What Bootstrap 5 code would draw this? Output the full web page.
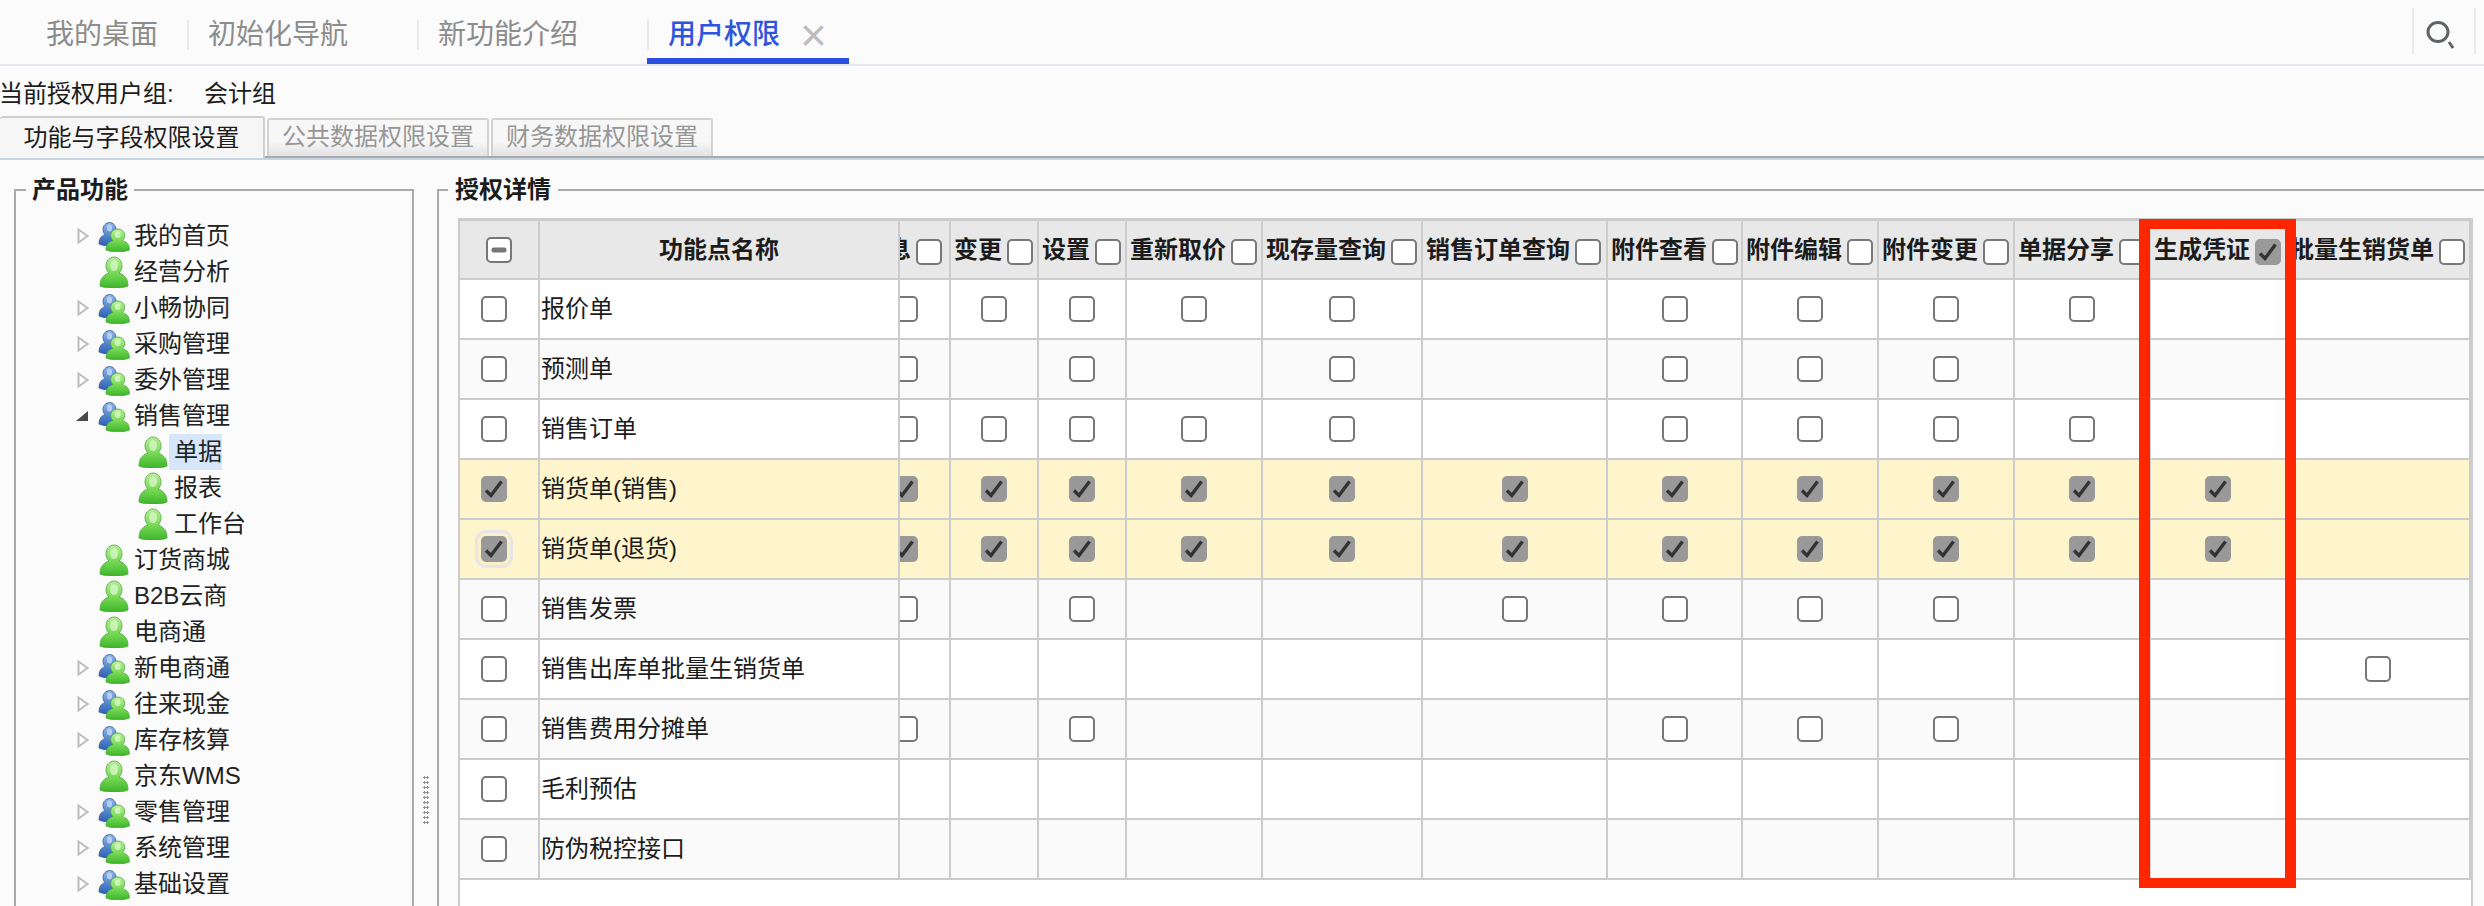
<!DOCTYPE html>
<html lang="zh-CN">
<head>
<meta charset="utf-8">
<title>用户权限</title>
<link href="https://cdn.jsdelivr.net/npm/bootstrap@5.3.0/dist/css/bootstrap.min.css" rel="stylesheet">
<style>
html,body{height:906px;overflow:hidden}
body{background:#fbfbfb;color:#1c1c1c;font-family:"Liberation Sans","Noto Sans CJK SC",sans-serif;font-size:24px;line-height:36px}
.page-root{position:relative;height:906px;overflow:hidden}
.svg-defs{position:absolute;width:0;height:0}
/* top bar */
.top-bar{height:66px;border-bottom:2px solid #e2e7ee}
.doc-tab{width:230px;height:64px;padding-top:20px;color:#8c8c8c;font-size:28px}
.doc-tab-first{width:187px}
.doc-tab-label{display:block;height:30px;line-height:30px;padding-left:19px;border-left:2px solid #e6e9ee}
.doc-tab-first .doc-tab-label{border-left:0;padding-left:46px}
.doc-tab-active{width:202px;height:64px;border-bottom:6px solid #2b50e0;color:#2f55dc;font-weight:500}
.doc-tab-active .doc-tab-label{padding-left:19px;display:flex;align-items:center}
.doc-tab-x{color:#bcbcbc;font-weight:400;margin-left:20px;font-size:46px;line-height:30px}
.search-box{width:64px;height:46px;margin:8px 8px 0 auto;border-left:2px solid #e6e9ee;border-right:2px solid #e6e9ee;padding:8px 0 0 11px}
/* user group line */
.group-line{height:50px;padding-top:10px;margin-left:-1px}
.group-label{width:205px}
/* sub tabs */
.sub-tabs{height:44px;border-bottom:2px solid #c5d5e4;box-shadow:inset 0 -2px 0 #aaa}
.sub-tab{height:38px;margin:0 0 2px 2px;padding:0 13px;line-height:34px;border:2px solid #d2d2d2;border-bottom:0;border-radius:3px 3px 0 0;color:#969696;background:linear-gradient(#f7f7f7 60%,#e2e2e2)}
.sub-tab-active{width:265px;height:42px;margin:0;padding:0;line-height:40px;text-align:center;color:#1c1c1c;background:#f6f6f6;border-width:2px 2px 0 0;border-color:#cfcfcf}
/* panels */
.main-area{height:746px;padding:12px 0 0 14px}
.panel{min-width:0;margin:0;padding:0;border:2px solid #aaa;border-bottom:0}
.panel-tree{width:400px;flex:none}
.panel-detail{flex:1 1 auto;border-right:0}
.panel-title{float:none;width:auto;margin:0 0 10px 10px;padding:0 6px;font-size:24px;line-height:36px;font-weight:700}
.panel-detail .panel-title{margin-left:9px;padding:0 7px}
.gutter{width:23px;flex:none;padding-top:603px}
.gutter-dots{width:6px;height:50px;margin:0 auto;background:radial-gradient(circle,#8f8f8f 1.1px,transparent 1.4px) 0 0/3px 5px}
/* tree */
.tree-row{height:36px;padding-left:60px}
.tree-l2{padding-left:121px}
.tree-arrow{width:22px;height:16px;flex:none}
.tree-icon{width:32px;height:32px;flex:none}
.tree-text{padding-left:4px;color:#222;white-space:nowrap}
.tree-selected{background:#d6e6fb;padding:0 0 0 5px;height:36px}
.tree-l2 .tree-text{padding-left:5px}
/* grid */
.grid-box{height:688px;margin:0 11px 0 19px;background:#fff;border:solid #ccc;border-width:3px 2px 0 2px}
.grid-pane{width:1571px;overflow:hidden}
table.perm-grid{table-layout:fixed;border-collapse:separate;border-spacing:0;margin:0;color:#1c1c1c}
.perm-fixed{width:440px;flex:none}
.perm-scroll{width:1611px;margin-left:-40px!important}
.perm-grid>*>tr>*{padding:0;height:60px;border-style:solid;border-color:#ccc;border-width:0 2px 2px 0;background:#fff;box-shadow:none;vertical-align:middle;text-align:center;font-size:24px;line-height:30px;white-space:nowrap}
.perm-grid>thead>tr>th{height:59px;background:#e8e8e8;font-weight:700}
.perm-grid>tbody>tr.row-alt>td{background:#fafafa}
.perm-grid>tbody>tr.row-sel>td{background:#fef5cc}
.perm-grid>tbody>tr>td.name-cell{text-align:left;padding-left:1px}
.perm-grid>tbody>tr>td.pick-cell{padding-right:10px}
.head-cell{padding-left:3px;gap:5px}
input.cb.form-check-input{display:block;flex:none;width:26px;height:26px;margin:0 auto;border:2px solid #777;border-radius:5px;background-color:#fff;box-shadow:none}
.head-cell input.cb.form-check-input{margin:4px 0 0}
input.cb.form-check-input:checked{background-color:#999;border-color:#999;--bs-form-check-bg-image:url("data:image/svg+xml,%3Csvg xmlns='http://www.w3.org/2000/svg' viewBox='0 0 22 22'%3E%3Cpath d='M3 12.500l5 5L18.500 3.500' fill='none' stroke='%23333' stroke-width='3.400'/%3E%3C/svg%3E")}
input.cb-mixed.form-check-input{background-image:url("data:image/svg+xml,%3Csvg xmlns='http://www.w3.org/2000/svg' viewBox='0 0 22 22'%3E%3Crect x='3.500' y='8.500' width='15' height='5' rx='2' fill='%23777'/%3E%3C/svg%3E")}
input.cb-focus.form-check-input{box-shadow:0 0 0 3px #fbf0c8,0 0 0 6px #e6e6e6;border-color:#777}
/* overlays */
.mark-layer{position:absolute;inset:0;overflow:hidden;pointer-events:none}
.mark-grid{display:grid;grid-template-columns:repeat(5,620px);grid-auto-rows:260px;width:3100px;margin:-14px 0 0 -110px}
.mark-tile{display:flex;flex-direction:column;align-items:center;justify-content:center;transform:rotate(-16deg);color:rgba(0,0,0,.022);font-size:40px;line-height:62px;white-space:nowrap}
.mark-second{padding-left:20px}
.note-box{position:absolute;left:2139px;top:219px;width:157px;height:669px;border:11px solid #ff2600;border-top-width:10px;border-bottom-width:10px;pointer-events:none}
</style>
</head>
<body>
<svg class="svg-defs" aria-hidden="true">
  <defs>
    <linearGradient id="gr" x1="0" y1="0" x2="0" y2="1"><stop offset="0" stop-color="#b8ee9a"/><stop offset=".55" stop-color="#74d853"/><stop offset="1" stop-color="#3cb42a"/></linearGradient>
    <linearGradient id="bl" x1="0" y1="0" x2="0" y2="1"><stop offset="0" stop-color="#8fb6e8"/><stop offset="1" stop-color="#2a5fb5"/></linearGradient>
    <symbol id="one" viewBox="0 0 32 32">
      <path d="M2 30c0-7 3-11 9-13-2-2-3-4.500-3-7 0-5 3.500-9 8-9s8 4 8 9c0 2.500-1 5-3 7 6 2 9 6 9 13-3 1.500-8 2-14 2s-11-.5-14-2z" fill="url(#gr)" stroke="#4aa938" stroke-width=".8"/>
      <ellipse cx="16" cy="9.500" rx="4" ry="5.500" fill="#d6f6c4" opacity=".8"/>
    </symbol>
    <symbol id="two" viewBox="0 0 32 32">
      <path d="M1 24c0-5 2-8 6-9.500-1.500-1.500-2-3-2-5 0-4 3-7 6.500-7s6.500 3 6.500 7c0 2-.5 3.500-2 5 4 1.500 6 4.500 6 9.500-3 1.300-6 1.800-10.500 1.800S4 25.300 1 24z" fill="url(#bl)" stroke="#2b5a9f" stroke-width=".8"/>
      <ellipse cx="11.500" cy="8" rx="2.600" ry="3.500" fill="#cfe0f7" opacity=".7"/>
      <path d="M8 30c0-5 2-8 7-9.500-1.500-1.500-2.300-3-2.300-5 0-4 3-6.500 7-6.500s7 2.500 7 6.500c0 2-.8 3.500-2.300 5 5 1.500 7 4.500 7 9.500-3 1.300-7 1.800-11.700 1.800S11 31.300 8 30z" fill="url(#gr)" stroke="#4aa938" stroke-width=".8"/>
      <ellipse cx="19.700" cy="14.500" rx="3" ry="3.600" fill="#d6f6c4" opacity=".8"/>
    </symbol>
    <symbol id="closed" viewBox="0 0 22 16"><path d="M2.500 1.500l9 6.500-9 6.500z" fill="#fff" stroke="#bdbdbd" stroke-width="2"/></symbol>
    <symbol id="opened" viewBox="0 0 22 16"><path d="M12 3v10H0z" fill="#4a4a4a"/></symbol>
  </defs>
</svg>

<div class="page-root">
  <header class="top-bar d-flex">
    <div class="doc-tab doc-tab-first"><span class="doc-tab-label">我的桌面</span></div>
    <div class="doc-tab"><span class="doc-tab-label">初始化导航</span></div>
    <div class="doc-tab"><span class="doc-tab-label">新功能介绍</span></div>
    <div class="doc-tab doc-tab-active"><span class="doc-tab-label">用户权限<span class="doc-tab-x">×</span></span></div>
    <div class="search-box">
      <svg width="32" height="30" viewBox="0 0 32 30"><ellipse cx="13" cy="11" rx="10" ry="9.500" fill="none" stroke="#5f6368" stroke-width="3"/><path d="M24 21l4 6" stroke="#5f6368" stroke-width="3"/></svg>
    </div>
  </header>

  <div class="group-line d-flex"><span class="group-label">当前授权用户组:</span><span>会计组</span></div>

  <div class="sub-tabs d-flex align-items-end">
    <div class="sub-tab sub-tab-active">功能与字段权限设置</div>
    <div class="sub-tab">公共数据权限设置</div>
    <div class="sub-tab">财务数据权限设置</div>
  </div>

  <main class="main-area d-flex">
    <fieldset class="panel panel-tree">
      <legend class="panel-title">产品功能</legend>
      <ul class="list-unstyled m-0">
        <li class="tree-row d-flex align-items-center"><svg class="tree-arrow"><use href="#closed"/></svg><svg class="tree-icon"><use href="#two"/></svg><span class="tree-text">我的首页</span></li>
        <li class="tree-row d-flex align-items-center"><span class="tree-arrow"></span><svg class="tree-icon"><use href="#one"/></svg><span class="tree-text">经营分析</span></li>
        <li class="tree-row d-flex align-items-center"><svg class="tree-arrow"><use href="#closed"/></svg><svg class="tree-icon"><use href="#two"/></svg><span class="tree-text">小畅协同</span></li>
        <li class="tree-row d-flex align-items-center"><svg class="tree-arrow"><use href="#closed"/></svg><svg class="tree-icon"><use href="#two"/></svg><span class="tree-text">采购管理</span></li>
        <li class="tree-row d-flex align-items-center"><svg class="tree-arrow"><use href="#closed"/></svg><svg class="tree-icon"><use href="#two"/></svg><span class="tree-text">委外管理</span></li>
        <li class="tree-row d-flex align-items-center"><svg class="tree-arrow"><use href="#opened"/></svg><svg class="tree-icon"><use href="#two"/></svg><span class="tree-text">销售管理</span></li>
        <li class="tree-row tree-l2 d-flex align-items-center"><svg class="tree-icon"><use href="#one"/></svg><span class="tree-text tree-selected">单据</span></li>
        <li class="tree-row tree-l2 d-flex align-items-center"><svg class="tree-icon"><use href="#one"/></svg><span class="tree-text">报表</span></li>
        <li class="tree-row tree-l2 d-flex align-items-center"><svg class="tree-icon"><use href="#one"/></svg><span class="tree-text">工作台</span></li>
        <li class="tree-row d-flex align-items-center"><span class="tree-arrow"></span><svg class="tree-icon"><use href="#one"/></svg><span class="tree-text">订货商城</span></li>
        <li class="tree-row d-flex align-items-center"><span class="tree-arrow"></span><svg class="tree-icon"><use href="#one"/></svg><span class="tree-text">B2B云商</span></li>
        <li class="tree-row d-flex align-items-center"><span class="tree-arrow"></span><svg class="tree-icon"><use href="#one"/></svg><span class="tree-text">电商通</span></li>
        <li class="tree-row d-flex align-items-center"><svg class="tree-arrow"><use href="#closed"/></svg><svg class="tree-icon"><use href="#two"/></svg><span class="tree-text">新电商通</span></li>
        <li class="tree-row d-flex align-items-center"><svg class="tree-arrow"><use href="#closed"/></svg><svg class="tree-icon"><use href="#two"/></svg><span class="tree-text">往来现金</span></li>
        <li class="tree-row d-flex align-items-center"><svg class="tree-arrow"><use href="#closed"/></svg><svg class="tree-icon"><use href="#two"/></svg><span class="tree-text">库存核算</span></li>
        <li class="tree-row d-flex align-items-center"><span class="tree-arrow"></span><svg class="tree-icon"><use href="#one"/></svg><span class="tree-text">京东WMS</span></li>
        <li class="tree-row d-flex align-items-center"><svg class="tree-arrow"><use href="#closed"/></svg><svg class="tree-icon"><use href="#two"/></svg><span class="tree-text">零售管理</span></li>
        <li class="tree-row d-flex align-items-center"><svg class="tree-arrow"><use href="#closed"/></svg><svg class="tree-icon"><use href="#two"/></svg><span class="tree-text">系统管理</span></li>
        <li class="tree-row d-flex align-items-center"><svg class="tree-arrow"><use href="#closed"/></svg><svg class="tree-icon"><use href="#two"/></svg><span class="tree-text">基础设置</span></li>
      </ul>
    </fieldset>

    <div class="gutter"><div class="gutter-dots"></div></div>

    <fieldset class="panel panel-detail">
      <legend class="panel-title">授权详情</legend>
      <div class="grid-box d-flex align-items-start">
        <table class="table perm-grid perm-fixed">
          <colgroup><col style="width:80px"><col style="width:360px"></colgroup>
          <thead><tr><th><input class="form-check-input cb cb-mixed" type="checkbox" aria-label="全选"></th><th>功能点名称</th></tr></thead>
          <tbody>
            <tr><td class="pick-cell"><input class="form-check-input cb" type="checkbox"></td><td class="name-cell">报价单</td></tr>
            <tr class="row-alt"><td class="pick-cell"><input class="form-check-input cb" type="checkbox"></td><td class="name-cell">预测单</td></tr>
            <tr><td class="pick-cell"><input class="form-check-input cb" type="checkbox"></td><td class="name-cell">销售订单</td></tr>
            <tr class="row-sel"><td class="pick-cell"><input class="form-check-input cb" type="checkbox" checked></td><td class="name-cell">销货单(销售)</td></tr>
            <tr class="row-sel"><td class="pick-cell"><input class="form-check-input cb cb-focus" type="checkbox" checked></td><td class="name-cell">销货单(退货)</td></tr>
            <tr class="row-alt"><td class="pick-cell"><input class="form-check-input cb" type="checkbox"></td><td class="name-cell">销售发票</td></tr>
            <tr><td class="pick-cell"><input class="form-check-input cb" type="checkbox"></td><td class="name-cell">销售出库单批量生销货单</td></tr>
            <tr class="row-alt"><td class="pick-cell"><input class="form-check-input cb" type="checkbox"></td><td class="name-cell">销售费用分摊单</td></tr>
            <tr><td class="pick-cell"><input class="form-check-input cb" type="checkbox"></td><td class="name-cell">毛利预估</td></tr>
            <tr class="row-alt"><td class="pick-cell"><input class="form-check-input cb" type="checkbox"></td><td class="name-cell">防伪税控接口</td></tr>
          </tbody>
        </table>
        <div class="grid-pane">
          <table class="table perm-grid perm-scroll">
            <colgroup><col style="width:91px"><col style="width:88px"><col style="width:88px"><col style="width:136px"><col style="width:160px"><col style="width:185px"><col style="width:135px"><col style="width:136px"><col style="width:136px"><col style="width:136px"><col style="width:136px"><col style="width:184px"></colgroup>
            <thead><tr>
              <th><div class="head-cell d-flex align-items-center">信息<input class="form-check-input cb" type="checkbox"></div></th>
              <th><div class="head-cell d-flex align-items-center">变更<input class="form-check-input cb" type="checkbox"></div></th>
              <th><div class="head-cell d-flex align-items-center">设置<input class="form-check-input cb" type="checkbox"></div></th>
              <th><div class="head-cell d-flex align-items-center">重新取价<input class="form-check-input cb" type="checkbox"></div></th>
              <th><div class="head-cell d-flex align-items-center">现存量查询<input class="form-check-input cb" type="checkbox"></div></th>
              <th><div class="head-cell d-flex align-items-center">销售订单查询<input class="form-check-input cb" type="checkbox"></div></th>
              <th><div class="head-cell d-flex align-items-center">附件查看<input class="form-check-input cb" type="checkbox"></div></th>
              <th><div class="head-cell d-flex align-items-center">附件编辑<input class="form-check-input cb" type="checkbox"></div></th>
              <th><div class="head-cell d-flex align-items-center">附件变更<input class="form-check-input cb" type="checkbox"></div></th>
              <th><div class="head-cell d-flex align-items-center">单据分享<input class="form-check-input cb" type="checkbox"></div></th>
              <th><div class="head-cell d-flex align-items-center">生成凭证<input class="form-check-input cb" type="checkbox" checked></div></th>
              <th><div class="head-cell d-flex align-items-center">批量生销货单<input class="form-check-input cb" type="checkbox"></div></th>
            </tr></thead>
            <tbody>
              <tr><td><input class="form-check-input cb" type="checkbox"></td><td><input class="form-check-input cb" type="checkbox"></td><td><input class="form-check-input cb" type="checkbox"></td><td><input class="form-check-input cb" type="checkbox"></td><td><input class="form-check-input cb" type="checkbox"></td><td></td><td><input class="form-check-input cb" type="checkbox"></td><td><input class="form-check-input cb" type="checkbox"></td><td><input class="form-check-input cb" type="checkbox"></td><td><input class="form-check-input cb" type="checkbox"></td><td></td><td></td></tr>
              <tr class="row-alt"><td><input class="form-check-input cb" type="checkbox"></td><td></td><td><input class="form-check-input cb" type="checkbox"></td><td></td><td><input class="form-check-input cb" type="checkbox"></td><td></td><td><input class="form-check-input cb" type="checkbox"></td><td><input class="form-check-input cb" type="checkbox"></td><td><input class="form-check-input cb" type="checkbox"></td><td></td><td></td><td></td></tr>
              <tr><td><input class="form-check-input cb" type="checkbox"></td><td><input class="form-check-input cb" type="checkbox"></td><td><input class="form-check-input cb" type="checkbox"></td><td><input class="form-check-input cb" type="checkbox"></td><td><input class="form-check-input cb" type="checkbox"></td><td></td><td><input class="form-check-input cb" type="checkbox"></td><td><input class="form-check-input cb" type="checkbox"></td><td><input class="form-check-input cb" type="checkbox"></td><td><input class="form-check-input cb" type="checkbox"></td><td></td><td></td></tr>
              <tr class="row-sel"><td><input class="form-check-input cb" type="checkbox" checked></td><td><input class="form-check-input cb" type="checkbox" checked></td><td><input class="form-check-input cb" type="checkbox" checked></td><td><input class="form-check-input cb" type="checkbox" checked></td><td><input class="form-check-input cb" type="checkbox" checked></td><td><input class="form-check-input cb" type="checkbox" checked></td><td><input class="form-check-input cb" type="checkbox" checked></td><td><input class="form-check-input cb" type="checkbox" checked></td><td><input class="form-check-input cb" type="checkbox" checked></td><td><input class="form-check-input cb" type="checkbox" checked></td><td><input class="form-check-input cb" type="checkbox" checked></td><td></td></tr>
              <tr class="row-sel"><td><input class="form-check-input cb" type="checkbox" checked></td><td><input class="form-check-input cb" type="checkbox" checked></td><td><input class="form-check-input cb" type="checkbox" checked></td><td><input class="form-check-input cb" type="checkbox" checked></td><td><input class="form-check-input cb" type="checkbox" checked></td><td><input class="form-check-input cb" type="checkbox" checked></td><td><input class="form-check-input cb" type="checkbox" checked></td><td><input class="form-check-input cb" type="checkbox" checked></td><td><input class="form-check-input cb" type="checkbox" checked></td><td><input class="form-check-input cb" type="checkbox" checked></td><td><input class="form-check-input cb" type="checkbox" checked></td><td></td></tr>
              <tr class="row-alt"><td><input class="form-check-input cb" type="checkbox"></td><td></td><td><input class="form-check-input cb" type="checkbox"></td><td></td><td></td><td><input class="form-check-input cb" type="checkbox"></td><td><input class="form-check-input cb" type="checkbox"></td><td><input class="form-check-input cb" type="checkbox"></td><td><input class="form-check-input cb" type="checkbox"></td><td></td><td></td><td></td></tr>
              <tr><td></td><td></td><td></td><td></td><td></td><td></td><td></td><td></td><td></td><td></td><td></td><td><input class="form-check-input cb" type="checkbox"></td></tr>
              <tr class="row-alt"><td><input class="form-check-input cb" type="checkbox"></td><td></td><td><input class="form-check-input cb" type="checkbox"></td><td></td><td></td><td></td><td><input class="form-check-input cb" type="checkbox"></td><td><input class="form-check-input cb" type="checkbox"></td><td><input class="form-check-input cb" type="checkbox"></td><td></td><td></td><td></td></tr>
              <tr><td></td><td></td><td></td><td></td><td></td><td></td><td></td><td></td><td></td><td></td><td></td><td></td></tr>
              <tr class="row-alt"><td></td><td></td><td></td><td></td><td></td><td></td><td></td><td></td><td></td><td></td><td></td><td></td></tr>
            </tbody>
          </table>
        </div>
      </div>
    </fieldset>
  </main>

  <div class="mark-layer" aria-hidden="true">
    <div class="mark-grid">
      <div class="mark-tile"><span>用户01010105</span><span class="mark-second">09140942</span></div>
      <div class="mark-tile"><span>用户01010105</span><span class="mark-second">09140942</span></div>
      <div class="mark-tile"><span>用户01010105</span><span class="mark-second">09140942</span></div>
      <div class="mark-tile"><span>用户01010105</span><span class="mark-second">09140942</span></div>
      <div class="mark-tile"><span>用户01010105</span><span class="mark-second">09140942</span></div>
      <div class="mark-tile"><span>用户01010105</span><span class="mark-second">09140942</span></div>
      <div class="mark-tile"><span>用户01010105</span><span class="mark-second">09140942</span></div>
      <div class="mark-tile"><span>用户01010105</span><span class="mark-second">09140942</span></div>
      <div class="mark-tile"><span>用户01010105</span><span class="mark-second">09140942</span></div>
      <div class="mark-tile"><span>用户01010105</span><span class="mark-second">09140942</span></div>
      <div class="mark-tile"><span>用户01010105</span><span class="mark-second">09140942</span></div>
      <div class="mark-tile"><span>用户01010105</span><span class="mark-second">09140942</span></div>
      <div class="mark-tile"><span>用户01010105</span><span class="mark-second">09140942</span></div>
      <div class="mark-tile"><span>用户01010105</span><span class="mark-second">09140942</span></div>
      <div class="mark-tile"><span>用户01010105</span><span class="mark-second">09140942</span></div>
      <div class="mark-tile"><span>用户01010105</span><span class="mark-second">09140942</span></div>
      <div class="mark-tile"><span>用户01010105</span><span class="mark-second">09140942</span></div>
      <div class="mark-tile"><span>用户01010105</span><span class="mark-second">09140942</span></div>
      <div class="mark-tile"><span>用户01010105</span><span class="mark-second">09140942</span></div>
      <div class="mark-tile"><span>用户01010105</span><span class="mark-second">09140942</span></div>
    </div>
  </div>
  <div class="note-box"></div>
</div>
<script src="https://cdn.jsdelivr.net/npm/bootstrap@5.3.0/dist/js/bootstrap.bundle.min.js"></script>
</body>
</html>
